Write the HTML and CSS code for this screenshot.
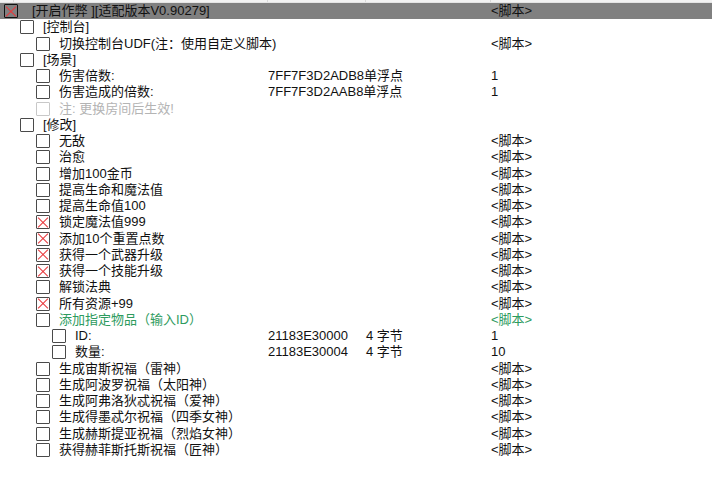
FILE: index.html
```html
<!DOCTYPE html>
<html lang="zh-CN">
  <head>
    <meta charset="UTF-8" />
    <title>Cheat Table</title>
    <link rel="stylesheet" href="styles.css">
  </head>
  <body>
    <div class="table">
      <div class="header">
        <span class="hcol"></span>
        <span class="hcol"></span>
        <span class="hcol"></span>
        <span class="hcol"></span>
      </div>

      <div class="row sel l0">
        <div class="tree"><span class="cb on"></span><span>[开启作弊 ][适配版本V0.90279]</span></div>
        <div class="addr"></div><div class="type"></div><div class="val">&lt;脚本&gt;</div>
      </div>
      <div class="row l1">
        <div class="tree"><span class="cb"></span><span>[控制台]</span></div>
        <div class="addr"></div><div class="type"></div><div class="val"></div>
      </div>
      <div class="row l2">
        <div class="tree"><span class="cb"></span><span>切换控制台UDF(注：使用自定义脚本)</span></div>
        <div class="addr"></div><div class="type"></div><div class="val">&lt;脚本&gt;</div>
      </div>
      <div class="row l1">
        <div class="tree"><span class="cb"></span><span>[场景]</span></div>
        <div class="addr"></div><div class="type"></div><div class="val"></div>
      </div>
      <div class="row l2">
        <div class="tree"><span class="cb"></span><span>伤害倍数:</span></div>
        <div class="addr">7FF7F3D2ADB8单浮点</div><div class="type"></div><div class="val">1</div>
      </div>
      <div class="row l2">
        <div class="tree"><span class="cb"></span><span>伤害造成的倍数:</span></div>
        <div class="addr">7FF7F3D2AAB8单浮点</div><div class="type"></div><div class="val">1</div>
      </div>
      <div class="row l2 dim">
        <div class="tree"><span class="cb"></span><span>注: 更换房间后生效!</span></div>
        <div class="addr"></div><div class="type"></div><div class="val"></div>
      </div>
      <div class="row l1">
        <div class="tree"><span class="cb"></span><span>[修改]</span></div>
        <div class="addr"></div><div class="type"></div><div class="val"></div>
      </div>
      <div class="row l2">
        <div class="tree"><span class="cb"></span><span>无敌</span></div>
        <div class="addr"></div><div class="type"></div><div class="val">&lt;脚本&gt;</div>
      </div>
      <div class="row l2">
        <div class="tree"><span class="cb"></span><span>治愈</span></div>
        <div class="addr"></div><div class="type"></div><div class="val">&lt;脚本&gt;</div>
      </div>
      <div class="row l2">
        <div class="tree"><span class="cb"></span><span>增加100金币</span></div>
        <div class="addr"></div><div class="type"></div><div class="val">&lt;脚本&gt;</div>
      </div>
      <div class="row l2">
        <div class="tree"><span class="cb"></span><span>提高生命和魔法值</span></div>
        <div class="addr"></div><div class="type"></div><div class="val">&lt;脚本&gt;</div>
      </div>
      <div class="row l2">
        <div class="tree"><span class="cb"></span><span>提高生命值100</span></div>
        <div class="addr"></div><div class="type"></div><div class="val">&lt;脚本&gt;</div>
      </div>
      <div class="row l2">
        <div class="tree"><span class="cb on"></span><span>锁定魔法值999</span></div>
        <div class="addr"></div><div class="type"></div><div class="val">&lt;脚本&gt;</div>
      </div>
      <div class="row l2">
        <div class="tree"><span class="cb on"></span><span>添加10个重置点数</span></div>
        <div class="addr"></div><div class="type"></div><div class="val">&lt;脚本&gt;</div>
      </div>
      <div class="row l2">
        <div class="tree"><span class="cb on"></span><span>获得一个武器升级</span></div>
        <div class="addr"></div><div class="type"></div><div class="val">&lt;脚本&gt;</div>
      </div>
      <div class="row l2">
        <div class="tree"><span class="cb on"></span><span>获得一个技能升级</span></div>
        <div class="addr"></div><div class="type"></div><div class="val">&lt;脚本&gt;</div>
      </div>
      <div class="row l2">
        <div class="tree"><span class="cb"></span><span>解锁法典</span></div>
        <div class="addr"></div><div class="type"></div><div class="val">&lt;脚本&gt;</div>
      </div>
      <div class="row l2">
        <div class="tree"><span class="cb on"></span><span>所有资源+99</span></div>
        <div class="addr"></div><div class="type"></div><div class="val">&lt;脚本&gt;</div>
      </div>
      <div class="row l2 green">
        <div class="tree"><span class="cb"></span><span>添加指定物品（输入ID）</span></div>
        <div class="addr"></div><div class="type"></div><div class="val">&lt;脚本&gt;</div>
      </div>
      <div class="row l3">
        <div class="tree"><span class="cb"></span><span>ID:</span></div>
        <div class="addr">21183E30000</div><div class="type">4 字节</div><div class="val">1</div>
      </div>
      <div class="row l3">
        <div class="tree"><span class="cb"></span><span>数量:</span></div>
        <div class="addr">21183E30004</div><div class="type">4 字节</div><div class="val">10</div>
      </div>
      <div class="row l2">
        <div class="tree"><span class="cb"></span><span>生成宙斯祝福（雷神）</span></div>
        <div class="addr"></div><div class="type"></div><div class="val">&lt;脚本&gt;</div>
      </div>
      <div class="row l2">
        <div class="tree"><span class="cb"></span><span>生成阿波罗祝福（太阳神）</span></div>
        <div class="addr"></div><div class="type"></div><div class="val">&lt;脚本&gt;</div>
      </div>
      <div class="row l2">
        <div class="tree"><span class="cb"></span><span>生成阿弗洛狄忒祝福（爱神）</span></div>
        <div class="addr"></div><div class="type"></div><div class="val">&lt;脚本&gt;</div>
      </div>
      <div class="row l2">
        <div class="tree"><span class="cb"></span><span>生成得墨忒尔祝福（四季女神）</span></div>
        <div class="addr"></div><div class="type"></div><div class="val">&lt;脚本&gt;</div>
      </div>
      <div class="row l2">
        <div class="tree"><span class="cb"></span><span>生成赫斯提亚祝福（烈焰女神）</span></div>
        <div class="addr"></div><div class="type"></div><div class="val">&lt;脚本&gt;</div>
      </div>
      <div class="row l2">
        <div class="tree"><span class="cb"></span><span>获得赫菲斯托斯祝福（匠神）</span></div>
        <div class="addr"></div><div class="type"></div><div class="val">&lt;脚本&gt;</div>
      </div>
    </div>
  </body>
</html>
```

FILE: styles.css
```css
:root {
  --row-h: 16.25px;
  --text: #111;
  --box: #4a4a4a;
  --red: #e8383c;
  --green: #2e9b5e;
  --dim: #b4b4b4;
  --sel: #808080;
}

* {
  margin: 0;
  padding: 0;
  box-sizing: border-box;
}

body {
  background: #fff;
  font-family: "Liberation Sans", "Noto Sans CJK SC", sans-serif;
  font-size: 13px;
  color: var(--text);
}

.table {
  width: 100%;
}

.header {
  display: grid;
  grid-template-columns: 14px 254px 98px 125px 1fr;
  height: 3px;
  background: #f2f2f2;
  border-bottom: 1px solid #e4e4e4;
}

.hcol {
  border-right: 1px solid #d9d9d9;
}

.row {
  display: grid;
  grid-template-columns: 268px 98px 125px 1fr;
  height: var(--row-h);
  line-height: var(--row-h);
  white-space: nowrap;
}

.tree {
  display: flex;
  align-items: center;
  gap: 9px;
}

.l0 .tree { padding-left: 4px; gap: 14px; }
.l1 .tree { padding-left: 20px; }
.l2 .tree { padding-left: 36px; gap: 9px; }
.l3 .tree { padding-left: 52px; gap: 9px; }

.sel {
  background: var(--sel);
}

.cb {
  flex: none;
  position: relative;
  width: 14px;
  height: 14px;
  border: 1px solid var(--box);
  border-radius: 1px;
}

/* red cross for checked entries */
.cb.on::before,
.cb.on::after {
  content: "";
  position: absolute;
  left: -1px;
  top: 5.5px;
  width: 14px;
  height: 1px;
  background: var(--red);
  transform: rotate(45deg);
}

.cb.on::after {
  transform: rotate(-45deg);
}

.sel .cb {
  border-color: #111;
}

.green {
  color: var(--green);
}

.dim {
  color: var(--dim);
}

.dim .cb {
  border-color: #c8c8c8;
}
```
